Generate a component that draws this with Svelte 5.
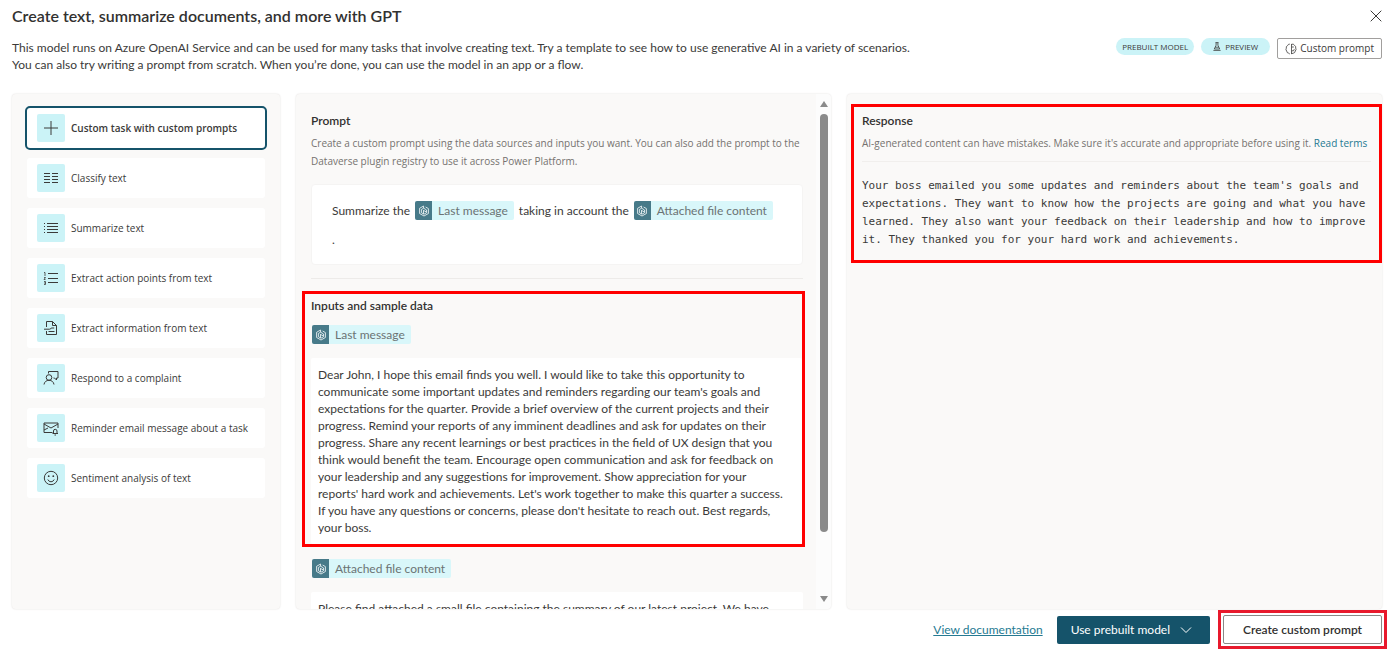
<script>
  const tasks = [
    { label: 'Custom task with custom prompts', icon: 'plus' },
    { label: 'Classify text', icon: 'columns' },
    { label: 'Summarize text', icon: 'bullets' },
    { label: 'Extract action points from text', icon: 'numbers' },
    { label: 'Extract information from text', icon: 'page' },
    { label: 'Respond to a complaint', icon: 'person' },
    { label: 'Reminder email message about a task', icon: 'mail' },
    { label: 'Sentiment analysis of text', icon: 'smile' }
  ];
  let selected = $state(0);
  let message = $state(
    "Dear John, I hope this email finds you well. I would like to take this opportunity to communicate some important updates and reminders regarding our team's goals and expectations for the quarter. Provide a brief overview of the current projects and their progress. Remind your reports of any imminent deadlines and ask for updates on their progress. Share any recent learnings or best practices in the field of UX design that you think would benefit the team. Encourage open communication and ask for feedback on your leadership and any suggestions for improvement. Show appreciation for your reports' hard work and achievements. Let's work together to make this quarter a success. If you have any questions or concerns, please don't hesitate to reach out. Best regards, your boss."
  );
  let attachment = $state(
    'Please find attached a small file containing the summary of our latest project. We have'
  );
</script>

{#snippet token(text)}
  <span class="token">
    <span class="token-icon">
      <svg viewBox="0 0 12 12" width="12" height="12" aria-hidden="true">
        <path d="M5.6 1 1.6 3.3v5.2L6 11l4.400-2.500V3.600L7.600 2M5.600 1v2.200L3.400 4.500v3.200L6 9.200l2.600-1.500V5L5.600 3.200M5.500 5.200v3.600M5.500 5.400 8.500 7" />
      </svg>
    </span>
    <span class="token-text">{text}</span>
  </span>
{/snippet}

{#snippet taskIcon(name)}
  <svg viewBox="0 0 16 16" width="16" height="16" aria-hidden="true">
    {#if name === 'plus'}
      <path d="M8 1v14M1 8h14" />
    {:else if name === 'columns'}
      <path d="M1 3.5h6M1 6.5h6M1 9.5h6M1 12.5h6M9 3.5h6M9 6.5h6M9 9.5h6M9 12.5h6" />
    {:else if name === 'bullets'}
      <path d="M4 3.5h11M4 6.5h11M4 9.5h11M4 12.5h11M1 3.5h1M1 6.5h1M1 9.5h1M1 12.5h1" />
    {:else if name === 'numbers'}
      <path d="M5 3.5h10M5 8.5h10M5 12.5h10" />
      <path class="fine" d="M1 2.500h1V6M1 7.500h1.500L1 9.500h1.500M1 11.500h1.500v3H1M1 13h1.500" />
    {:else if name === 'page'}
      <path d="M3.500 7V1.500h6l4 4v9h-10V11M9.500 1.500v4h4M1 9.200h5.500q1.400 0 1.700-1.200h3M5.500 11.500h6" />
    {:else if name === 'person'}
      <circle cx="6" cy="7.500" r="2.800" />
      <path d="M1 14.500c.4-2.600 2.300-4.200 5-4.200s4.600 1.600 5 4.200M5.500 3.500v-2h9.500v6.500h-1.500v2l-2-2h-1" />
    {:else if name === 'mail'}
      <path d="M9.500 12.500h-8.500v-9.500h14v5M1 4l7 4 7-4M1 10l4-2M9.500 13.500h5.500M10.500 13.500v-2.500q0-1.700 1.700-1.700t1.800 1.700v2.500M11.500 15h1.500" />
    {:else}
      <circle cx="8" cy="8" r="6.700" />
      <path d="M4.800 9.500q1 2.300 3.200 2.300t3.200-2.300" />
      <circle class="dot" cx="5.700" cy="6.200" r=".9" />
      <circle class="dot" cx="10.300" cy="6.200" r=".9" />
    {/if}
  </svg>
{/snippet}

<div class="dialog">
  <header>
    <div class="title-row">
      <h1>Create text, summarize documents, and more with GPT</h1>
      <button class="close" aria-label="Close">
        <svg viewBox="0 0 12 12" width="12" height="12" aria-hidden="true"><path d="M.7.7l10.600 10.600M11.300.7.7 11.300" /></svg>
      </button>
    </div>
    <div class="intro-row">
      <p>
        This model runs on Azure OpenAI Service and can be used for many tasks that involve creating text. Try a template to see how to use generative AI in a variety of scenarios.<br />
        You can also try writing a prompt from scratch. When you’re done, you can use the model in an app or a flow.
      </p>
      <div class="badges">
        <span class="pill">PREBUILT MODEL</span>
        <span class="pill preview">
          <svg viewBox="0 0 8 9" width="8" height="9" aria-hidden="true"><path d="M2.500.6h3M3.100.6v2.600L1.300 7h5.400L4.900 3.200V.6M2.200 5.200h3.600M.4 8.400h7.200" /></svg>
          PREVIEW
        </span>
        <button class="custom">
          <svg viewBox="0 0 12 12" width="12" height="12" aria-hidden="true"><path d="M4.800 1.100Q3.200.9 2.700 2.500.8 3.300 1.300 5.200q-.9 1.500.4 2.900.2 2 2 2.100l1.100.8M6.500 1v10M6.500 1.300q2-.8 2.900 1 1.800.8 1.300 2.700.9 1.500-.4 3-.3 2-2 2.200l-1.800.5M6.800 4h2M7 7.800h1.500l.8-1.600" /></svg>
          Custom prompt
        </button>
      </div>
    </div>
  </header>

  <main>
    <nav class="panel tasks" aria-label="Templates">
      {#each tasks as task, i}
        <button class="task" class:selected={selected === i} onclick={() => (selected = i)}>
          <span class="task-icon">{@render taskIcon(task.icon)}</span>
          {task.label}
        </button>
      {/each}
    </nav>

    <div class="panel editor">
      <div class="scroll">
        <section class="prompt">
          <h2>Prompt</h2>
          <p class="hint">
            Create a custom prompt using the data sources and inputs you want. You can also add the prompt to the Dataverse plugin registry to use it across Power Platform.
          </p>
          <div class="prompt-box" role="textbox" aria-label="Prompt" tabindex="0">
            <p>
              <span>Summarize the</span>
              {@render token('Last message')}
              <span>taking in account the</span>
              {@render token('Attached file content')}
            </p>
            <p>.</p>
          </div>
        </section>
        <section class="inputs marked">
          <h2>Inputs and sample data</h2>
          <label for="message">{@render token('Last message')}</label>
          <textarea id="message" rows="10" bind:value={message}></textarea>
        </section>
        <section class="attachment">
          <label for="attachment">{@render token('Attached file content')}</label>
          <textarea id="attachment" rows="4" bind:value={attachment}></textarea>
        </section>
      </div>
      <div class="scrollbar" aria-hidden="true">
        <svg viewBox="0 0 8 6" width="8" height="6"><path d="M4 0 8 6H0z" /></svg>
        <div class="track"><div class="thumb"></div></div>
        <svg viewBox="0 0 8 6" width="8" height="6"><path d="M0 0h8L4 6z" /></svg>
      </div>
    </div>

    <div class="panel response">
      <section class="marked">
        <h2>Response</h2>
        <p class="hint">
          AI-generated content can have mistakes. Make sure it's accurate and appropriate before using it.
          <a href="#terms">Read terms</a>
        </p>
        <p class="output">
          Your boss emailed you some updates and reminders about the team's goals and expectations. They want to know how the projects are going and what you have learned. They also want your feedback on their leadership and how to improve it. They thanked you for your hard work and achievements.
        </p>
      </section>
    </div>
  </main>

  <footer>
    <a href="#docs">View documentation</a>
    <button class="primary">
      Use prebuilt model
      <svg viewBox="0 0 12 8" width="12" height="8" aria-hidden="true"><path d="M1 1.500l5 5 5-5" /></svg>
    </button>
    <div class="create-mark"><button class="create">Create custom prompt</button></div>
  </footer>
</div>

<style>
  :global(body) {
    margin: 0;
    background: #fff;
  }
  .dialog {
    box-sizing: border-box;
    height: 100vh;
    display: flex;
    flex-direction: column;
    padding: 7px 7px 7px 12px;
    font: 12px/17px Lato, 'Open Sans', sans-serif;
    color: #3b3a39;
  }
  h1, h2, p {
    margin: 0;
  }
  button {
    font: inherit;
    color: inherit;
    cursor: pointer;
  }
  svg {
    fill: none;
    stroke: currentColor;
    flex: none;
  }
  header, main {
    margin-right: 5px;
  }
  .title-row {
    display: flex;
    justify-content: space-between;
    align-items: center;
    height: 18px;
  }
  h1 {
    font-size: 16px;
    line-height: 18px;
    font-weight: 600;
    color: #323130;
  }
  .close {
    display: flex;
    padding: 0;
    border: 0;
    background: none;
  }
  .intro-row {
    display: flex;
    justify-content: space-between;
    align-items: flex-start;
    gap: 16px;
    margin-top: 13px;
  }
  .intro-row p {
    padding-top: 1px;
  }
  .badges {
    display: flex;
    flex: none;
    gap: 7px;
    font-family: 'Open Sans', sans-serif;
  }
  .pill {
    display: flex;
    align-items: center;
    gap: 4px;
    height: 17px;
    padding: 0 6px;
    border-radius: 9px;
    background: #cbf3f7;
    font-size: 8px;
  }
  .preview {
    padding: 0 12px;
  }
  .custom {
    display: flex;
    align-items: center;
    gap: 3px;
    height: 21px;
    padding: 0 7px;
    border: 1px solid #a19f9d;
    border-radius: 2px;
    background: #fff;
    font-size: 10px;
  }
  .pill svg, .custom svg, .fine {
    stroke-width: 0.8;
  }
  main {
    flex: 1;
    min-height: 0;
    display: grid;
    grid-template-columns: 268fr 535fr 535fr;
    gap: 16px;
    margin-top: 21px;
  }
  .panel {
    box-sizing: border-box;
    min-width: 0;
    min-height: 0;
    border-radius: 4px;
    background: #faf9f8;
    box-shadow: 0 0 2px #dddbd9;
  }
  .tasks {
    display: flex;
    flex-direction: column;
    gap: 6px;
    padding: 12px 13px;
  }
  .task {
    box-sizing: border-box;
    height: 44px;
    display: flex;
    align-items: center;
    gap: 6px;
    padding: 0 10px;
    border: 2px solid transparent;
    border-radius: 5px;
    background: #fff padding-box;
    font: 10px/14px 'Open Sans', sans-serif;
    text-align: left;
  }
  .selected {
    border-color: #15536a;
    font-weight: 600;
  }
  .task-icon {
    display: flex;
    align-items: center;
    justify-content: center;
    width: 28px;
    height: 28px;
    border-radius: 2px;
    background: #cbf3f7;
  }
  .dot {
    fill: currentColor;
    stroke: none;
  }
  .editor {
    display: flex;
    overflow: hidden;
  }
  .scroll {
    flex: 1;
    min-width: 0;
    overflow: hidden;
    padding: 18px 11px 0 6px;
  }
  .prompt {
    margin: 0 2px 0 9px;
    padding-bottom: 13px;
    border-bottom: 1px solid #edebe9;
  }
  h2 {
    font-size: 12px;
    line-height: 18px;
    font-weight: 600;
    color: #323130;
  }
  .hint {
    margin-top: 4px;
    font: 10px/18px 'Open Sans', sans-serif;
    color: #75726f;
  }
  .prompt-box {
    margin-top: 14px;
    padding: 11px 20px 10px;
    border: 1px solid #f5f4f3;
    border-radius: 4px;
    background: #fff;
    line-height: 29px;
  }
  .prompt-box p {
    display: flex;
    flex-wrap: wrap;
    align-items: center;
    column-gap: 5px;
  }
  .token {
    display: inline-flex;
    height: 19px;
    line-height: 19px;
    border-radius: 2px;
    overflow: hidden;
    background: #d9f7fa;
    color: #6b7374;
  }
  .token-icon {
    display: flex;
    align-items: center;
    justify-content: center;
    width: 17px;
    background: #477a89;
    color: #fff;
  }
  .token-icon svg {
    stroke-width: 0.8;
  }
  .token-text {
    padding: 0 6px;
  }
  .marked {
    border: 3px solid #f00;
  }
  .inputs {
    margin-top: 12px;
    padding: 3px 0 0 6px;
  }
  label {
    display: flex;
    padding-left: 1px;
  }
  .inputs label {
    margin-top: 10px;
  }
  textarea {
    box-sizing: border-box;
    display: block;
    width: 100%;
    margin-top: 14px;
    padding: 8px 16px 8px 7px;
    border: 0;
    border-radius: 2px;
    resize: none;
    overflow: hidden;
    background: #fff;
    color: inherit;
    font: inherit;
  }
  .attachment {
    margin: 12px 2px 0 9px;
  }
  .scrollbar {
    width: 15px;
    display: flex;
    flex-direction: column;
    align-items: center;
    gap: 7px;
    padding: 7px 0;
    box-sizing: border-box;
    background: #fcfcfc;
  }
  .scrollbar path {
    fill: #8a8a8a;
    stroke: none;
  }
  .track {
    flex: 1;
  }
  .thumb {
    width: 8px;
    height: 88%;
    border-radius: 4px;
    background: #8a8a8a;
  }
  .response {
    padding: 10px 0 0 4px;
  }
  .response section {
    padding: 5px 8px 11px 8px;
  }
  .response .hint {
    padding-bottom: 9px;
    border-bottom: 1px solid #f1efed;
  }
  .hint a {
    color: #257a92;
    text-decoration: none;
  }
  .output {
    margin-top: 15px;
    font: 11px/18px 'DejaVu Sans Mono', monospace;
  }
  footer {
    display: flex;
    justify-content: flex-end;
    align-items: center;
    font-size: 12px;
    margin-top: 1px;
  }
  footer > a {
    margin-right: 14px;
    color: #257a92;
  }
  .primary {
    display: flex;
    align-items: center;
    gap: 10px;
    height: 28px;
    padding: 0 18px 0 14px;
    border: 0;
    border-radius: 2px;
    background: #15536a;
    color: #fff;
  }
  .create-mark {
    margin-left: 8px;
    padding: 2px;
    border: 3px solid #e8192c;
  }
  .create {
    display: block;
    height: 29px;
    padding: 0 19px;
    border: 1px solid #8a8886;
    border-radius: 2px;
    background: #fff;
    color: #323130;
    font-weight: 600;
  }
</style>
